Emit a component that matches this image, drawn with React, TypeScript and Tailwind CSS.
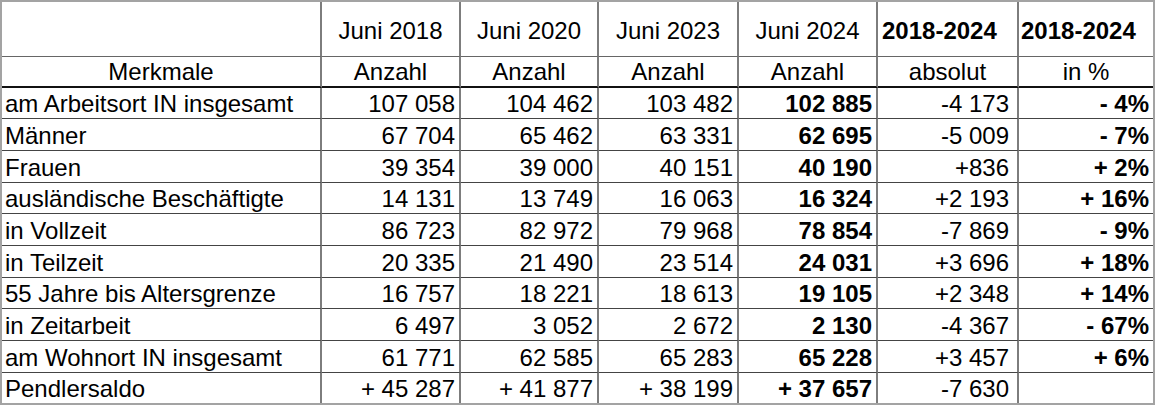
type Row = {
  label: string
  values: [string, string, string, string]
  abs: string
  pct: string
}

const rows: Row[] = [
  { label: "am Arbeitsort IN insgesamt", values: ["107 058", "104 462", "103 482", "102 885"], abs: "-4 173", pct: "- 4%" },
  { label: "Männer", values: ["67 704", "65 462", "63 331", "62 695"], abs: "-5 009", pct: "- 7%" },
  { label: "Frauen", values: ["39 354", "39 000", "40 151", "40 190"], abs: "+836", pct: "+ 2%" },
  { label: "ausländische Beschäftigte", values: ["14 131", "13 749", "16 063", "16 324"], abs: "+2 193", pct: "+ 16%" },
  { label: "in Vollzeit", values: ["86 723", "82 972", "79 968", "78 854"], abs: "-7 869", pct: "- 9%" },
  { label: "in Teilzeit", values: ["20 335", "21 490", "23 514", "24 031"], abs: "+3 696", pct: "+ 18%" },
  { label: "55 Jahre bis Altersgrenze", values: ["16 757", "18 221", "18 613", "19 105"], abs: "+2 348", pct: "+ 14%" },
  { label: "in Zeitarbeit", values: ["6 497", "3 052", "2 672", "2 130"], abs: "-4 367", pct: "- 67%" },
  { label: "am Wohnort IN insgesamt", values: ["61 771", "62 585", "65 283", "65 228"], abs: "+3 457", pct: "+ 6%" },
  { label: "Pendlersaldo", values: ["+ 45 287", "+ 41 877", "+ 38 199", "+ 37 657"], abs: "-7 630", pct: "" },
]

const years = ["Juni 2018", "Juni 2020", "Juni 2023", "Juni 2024"]

// vertical grid line on every cell except the last column
const vline = "border-r-2 border-r-[#7d7d7d]"

export default function App() {
  return (
    <div
      className="w-[1155px] h-[405px] border-2 border-[#a3a3a3] bg-white text-black text-[24px] leading-[1.15]"
      style={{ fontFamily: '"Liberation Sans", Arial, sans-serif' }}
    >
      <div className="grid grid-cols-[320px_139px_138px_140px_139px_141px_134px] grid-rows-[55px_31px_31px_32px_32px_31px_32px_32px_31px_32px_32px_30px]">
        {/* header row 1 */}
        <div className={`${vline} border-b border-b-[#666]`} />
        {years.map((y) => (
          <div key={y} className={`${vline} border-b border-b-[#666] flex items-center justify-center pt-[3px]`}>
            {y}
          </div>
        ))}
        <div className={`${vline} border-b border-b-[#666] flex items-center pl-[4px] pt-[3px] font-bold`}>2018-2024</div>
        <div className="border-b border-b-[#666] flex items-center pl-[2px] pt-[3px] font-bold">2018-2024</div>

        {/* header row 2 */}
        <div className={`${vline} border-b-2 border-b-[#111] flex items-end justify-center`}>Merkmale</div>
        {years.map((y) => (
          <div key={y} className={`${vline} border-b-2 border-b-[#111] flex items-end justify-center`}>
            Anzahl
          </div>
        ))}
        <div className={`${vline} border-b-2 border-b-[#111] flex items-end justify-center`}>absolut</div>
        <div className="border-b-2 border-b-[#111] flex items-end justify-center">in %</div>

        {/* data rows */}
        {rows.map((r, i) => {
          const last = i === rows.length - 1
          const hline = last ? "" : "border-b border-b-[#444]"
          return (
            <div key={r.label} className="contents">
              <div className={`${vline} ${hline} flex items-end pl-[3px] whitespace-nowrap`}>{r.label}</div>
              {r.values.map((v, j) => (
                <div
                  key={j}
                  className={`${vline} ${hline} flex items-end justify-end pr-[4px] whitespace-nowrap ${j === 3 ? "font-bold" : ""}`}
                >
                  {v}
                </div>
              ))}
              <div className={`${vline} ${hline} flex items-end justify-end pr-[8px] whitespace-nowrap`}>{r.abs}</div>
              <div className={`${hline} flex items-end justify-end pr-[4px] whitespace-nowrap font-bold`}>{r.pct}</div>
            </div>
          )
        })}
      </div>
    </div>
  )
}
